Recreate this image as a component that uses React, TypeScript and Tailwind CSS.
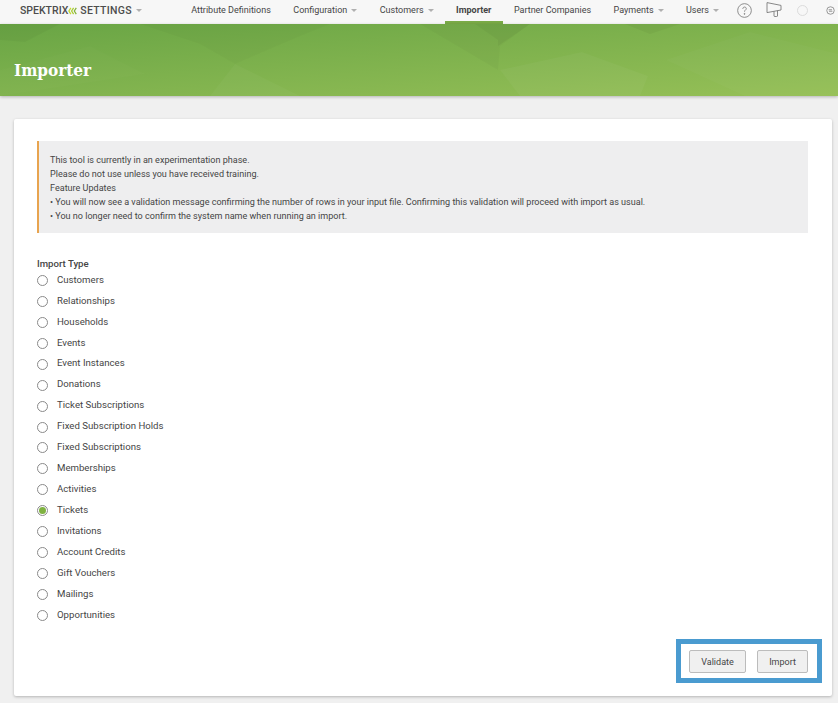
const navItems = [
  { label: "Attribute Definitions", caret: false },
  { label: "Configuration", caret: true },
  { label: "Customers", caret: true },
  { label: "Importer", caret: false, active: true },
  { label: "Partner Companies", caret: false },
  { label: "Payments", caret: true },
  { label: "Users", caret: true },
];

const importTypes = [
  "Customers",
  "Relationships",
  "Households",
  "Events",
  "Event Instances",
  "Donations",
  "Ticket Subscriptions",
  "Fixed Subscription Holds",
  "Fixed Subscriptions",
  "Memberships",
  "Activities",
  "Tickets",
  "Invitations",
  "Account Credits",
  "Gift Vouchers",
  "Mailings",
  "Opportunities",
];

function Caret() {
  return <span className="ml-[4px] inline-block size-0 border-x-[3px] border-t-[3px] border-x-transparent border-t-[#b0b0b0]" />;
}

function Logo() {
  return (
    <svg viewBox="0 0 10 8" className="h-[8px] w-[9px]" fill="none" strokeWidth="1.4" aria-hidden>
      <path d="M3.2 0.5 L1 4 L3.2 7.5" stroke="#c5d82e" />
      <path d="M6.2 0.5 L4 4 L6.2 7.5" stroke="#a8cc2f" />
      <path d="M9.2 0.5 L7 4 L9.2 7.5" stroke="#86b43a" />
    </svg>
  );
}

function TopIcons() {
  return (
    <div className="ml-[7px] flex items-center pb-[3px] text-[#7a7a7a]">
      <svg viewBox="0 0 16 16" className="size-[15px]" fill="none" stroke="currentColor" strokeWidth="0.9" aria-hidden>
        <circle cx="8" cy="8" r="7.3" />
        <path d="M6.2 6.3 C6.2 4.9 7.2 4.3 8 4.3 C9 4.3 9.9 5 9.9 6 C9.9 7.4 8 7.5 8 9.3" />
        <circle cx="8" cy="11.6" r="0.5" fill="currentColor" />
      </svg>
      <svg viewBox="0 0 16 15" className="ml-[14px] -mt-[3px] h-[15px] w-[16px]" fill="none" stroke="currentColor" strokeWidth="0.9" aria-hidden>
        <path d="M1 0.6 L15 3.4 V8 L1 10.6 Z" />
        <path d="M8 9.4 V14 Q8 14.5 9 14.5 H10.5 Q11.5 14.5 11.5 14 V8.6" />
      </svg>
      <span className="ml-[15px] size-[11px] rounded-full border border-[#dcdcdc]" />
      <svg viewBox="0 0 12 12" className="ml-[18px] size-[9px]" fill="none" stroke="currentColor" strokeWidth="1" aria-hidden>
        <circle cx="6" cy="6" r="5" />
        <path d="M3.5 5 H8 M8.5 7 H4" />
      </svg>
    </div>
  );
}

function BannerFacets() {
  return (
    <svg viewBox="0 0 838 72" preserveAspectRatio="none" className="absolute inset-0 h-full w-full" aria-hidden>
      <polygon points="0,0 60,0 25,18 0,16" fill="#000000" opacity="0.03" />
      <polygon points="90,22 145,50 0,72 0,46" fill="#ffffff" opacity="0.015" />
      <polygon points="235,40 305,10 330,0 140,0 200,20" fill="#000000" opacity="0.02" />
      <polygon points="235,40 300,72 210,72" fill="#ffffff" opacity="0.03" />
      <polygon points="420,0 530,0 500,22 498,46" fill="#000000" opacity="0.025" />
      <polygon points="500,46 582,28 648,52 640,72 520,72" fill="#ffffff" opacity="0.035" />
      <polygon points="475,0 530,0 498,22 498,16" fill="#000000" opacity="0.035" />
      <polygon points="625,0 680,0 650,10" fill="#000000" opacity="0.04" />
      <polygon points="666,36 750,8 838,30 838,72 745,72" fill="#ffffff" opacity="0.025" />
    </svg>
  );
}

export default function App() {
  return (
    <div className="flex h-[703px] w-[838px] flex-col overflow-hidden bg-[#f0f0f0] font-['Roboto',sans-serif] text-[#454545]">
      <header className="flex h-6 shrink-0 items-center whitespace-nowrap bg-[#f7f7f7] pl-[20px]">
        <div className="flex items-center pb-[3px] text-[10.5px] font-medium text-[#4d4d4d]">
          <span>SPEKTRIX</span>
          <Logo />
          <span className="ml-[3px] tracking-[0.3px]">SETTINGS</span>
          <Caret />
        </div>
        <nav className="ml-[38px] flex h-full items-center text-[9px]">
          {navItems.map((item) => (
            <div
              key={item.label}
              className={
                item.active
                  ? "flex h-full items-center border-b-[3px] border-[#7aab47] px-[11.25px] font-bold"
                  : "flex h-full items-center px-[11.25px] pb-[3px]"
              }
            >
              <span>{item.label}</span>
              {item.caret && <Caret />}
            </div>
          ))}
        </nav>
        <TopIcons />
      </header>

      <div className="relative flex h-[72px] shrink-0 items-center bg-gradient-to-br from-[#69a545] to-[#96c057] pl-[14px] pt-[21px] shadow-[0_1px_3px_rgba(0,0,0,0.25)]">
        <BannerFacets />
        <h1 className="relative font-['DejaVu_Serif',serif] text-[17px] font-bold text-white [font-stretch:condensed]">Importer</h1>
      </div>

      <main className="relative mx-[14px] mt-[23px] h-[577px] w-[818px] shrink-0 rounded-[2px] bg-white pl-[23px] pr-[24px] pt-[22px] shadow-[0_1px_3px_rgba(0,0,0,0.25)]">
        <div className="h-[92px] border-l-2 border-[#e8a44f] bg-[#eeeeef] pl-[11px] pt-[12px] text-[9.06px] leading-[14px]">
          <p>This tool is currently in an experimentation phase.</p>
          <p>Please do not use unless you have received training.</p>
          <p>Feature Updates</p>
          <p>• You will now see a validation message confirming the number of rows in your input file. Confirming this validation will proceed with import as usual.</p>
          <p>• You no longer need to confirm the system name when running an import.</p>
        </div>

        <p className="mt-[24px] text-[9.6px] font-medium leading-[14px]">Import Type</p>
        <div className="-mt-[1px] text-[9.65px]">
          {importTypes.map((name) => (
            <label key={name} className="flex h-[20.95px] items-center">
              <span className="flex size-[11px] items-center justify-center rounded-full border border-[#8a8a8a]">
                {name === "Tickets" && <span className="size-[7px] rounded-full bg-[#7fb241]" />}
              </span>
              <span className="ml-[9px] pb-[1px]">{name}</span>
            </label>
          ))}
        </div>

        <div className="mt-[24px] flex justify-end gap-[11px] text-[9px]">
          <button className="h-[23px] w-[57px] rounded-[2px] border border-[#bcbcbc] bg-[#f0f0f0] pt-[2px]">Validate</button>
          <button className="h-[23px] w-[51px] rounded-[2px] border border-[#bcbcbc] bg-[#f0f0f0] pt-[2px]">Import</button>
        </div>

        <div className="absolute left-[662px] top-[520px] h-[44px] w-[146px] border-[5px] border-[#4a9bd0]" />
      </main>
    </div>
  );
}
